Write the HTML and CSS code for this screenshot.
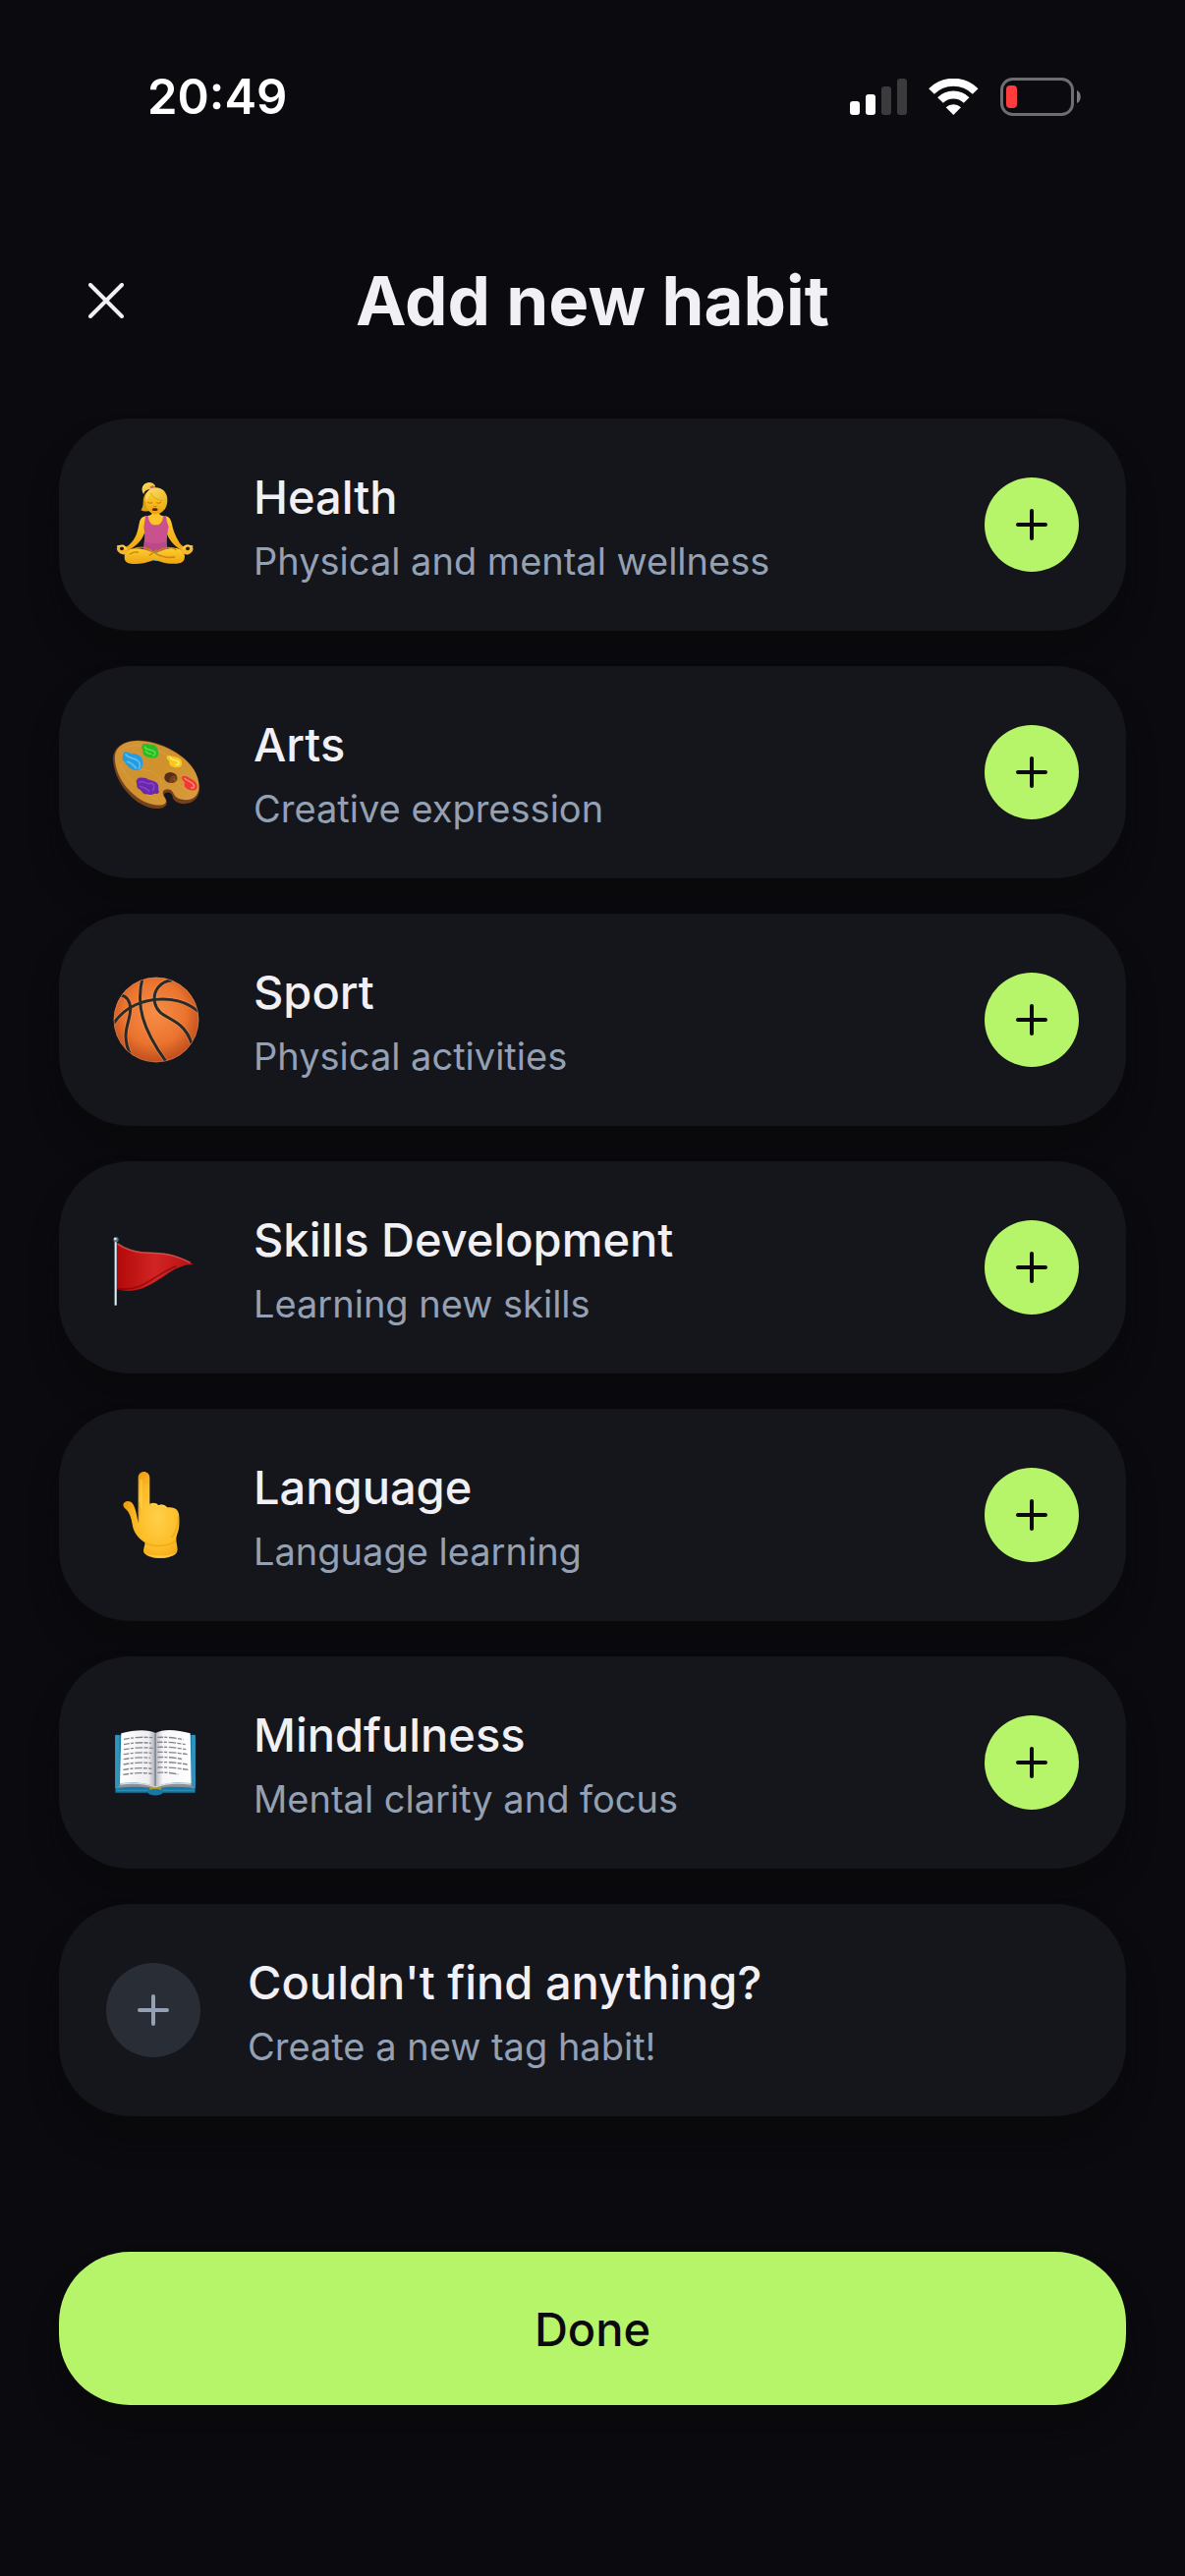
FILE: index.html
```html
<!DOCTYPE html>
<html lang="en">

<head>
    <meta charset="UTF-8">
    <meta name="viewport" content="width=device-width, initial-scale=1.0">
    <title>Add new habit</title>
    <link rel="stylesheet" href="styles.css">
</head>

<body>
    <!-- shared plus sign -->
    <svg class="defs" width="0" height="0" aria-hidden="true">
        <symbol id="plus" viewBox="0 0 32 32">
            <path d="M16 2v28M2 16h28" fill="none" stroke="currentColor" stroke-width="4" stroke-linecap="round" />
        </symbol>
    </svg>

    <div class="status">
        <time class="clock">20:49</time>
        <div class="signals">
            <svg width="58" height="37" viewBox="0 0 58 37" fill="#fff">
                <rect y="23" width="10" height="14" rx="3" />
                <rect x="16" y="16" width="10" height="21" rx="3" />
                <rect x="32" y="8" width="10" height="29" rx="3" fill="#3b3b3e" />
                <rect x="48" width="10" height="37" rx="3" fill="#3b3b3e" />
            </svg>
            <svg width="51" height="37" viewBox="315 57 153 111">
                <path d="M324 96A94.5 94.5 0 0 1 458 96M351 123A56.5 56.5 0 0 1 431 123" fill="none" stroke="#fff" stroke-width="24" />
                <path d="M391 168L368 145A34 34 0 0 1 414 145Z" fill="#fff" />
            </svg>
            <svg width="82" height="39" viewBox="0 0 82 39">
                <rect x="1.5" y="1.5" width="72" height="36" rx="11" fill="none" stroke="#6e6e71" stroke-width="3" />
                <rect x="6" y="8" width="11" height="23" rx="4" fill="#ff3b3b" />
                <path d="M78 13c5 2 5 11 0 13z" fill="#7c7c7f" />
            </svg>
        </div>
    </div>

    <header class="header">
        <button class="close" type="button" aria-label="Close">
            <svg width="36" height="36" viewBox="0 0 36 36">
                <path d="M2 2l32 32M34 2L2 34" fill="none" stroke="currentColor" stroke-width="4" stroke-linecap="round" />
            </svg>
        </button>
        <h1>Add new habit</h1>
    </header>

    <main class="content">
        <ul class="habits">
            <li class="card">
                <span class="emoji">
                    <!-- woman in lotus position -->
                    <svg viewBox="24 48 288 288">
                        <defs>
                            <linearGradient id="skin" x1="0" y1="0" x2="0" y2="1">
                                <stop offset="0" stop-color="#ffcf2c" />
                                <stop offset="1" stop-color="#eda313" />
                            </linearGradient>
                            <linearGradient id="hair" x1="0" y1="0" x2="1" y2="1">
                                <stop offset="0" stop-color="#ffe270" />
                                <stop offset="1" stop-color="#e6a90c" />
                            </linearGradient>
                        </defs>
                        <path d="M158 88C146 92 137 104 137 124c0 12-2 16-7 24 10 5 20 4 28 1z" fill="#dc9d10" />
                        <path d="M161 85c-12-1-21 5-22 14-9-10-6-28 6-33 10-5 22-3 29 7l-4 12z" fill="url(#hair)" />
                        <path d="M157 78l8-5 11 4-7 8z" fill="#d8507c" />
                        <path d="M163 148h24v26h-24z" fill="#e5a412" />
                        <path d="M141 169c7-4 20-5 24-10h20c5 6 16 6 24 10l-8 25h-53z" fill="#fec328" />
                        <path d="M146 166c-12 1-18 8-21 22-4 21-8 39-20 54-8 10-16 17-25 21l7 9c15-6 28-15 39-28 13-15 19-34 22-56zM205 166c10 1 16 9 19 21 5 24 12 39 20 54 5 10 12 16 21 22l-6 9c-14-6-26-15-36-28-12-15-19-34-22-57z" fill="url(#skin)" />
                        <path d="M166 269c5-5 19-5 24 0l-6 34h-14z" fill="#3c9cd0" />
                        <path d="M144 167l9 0c1 36 43 37 45 0h9c2 17 6 23 8 32-5 22-7 41-4 70-15 7-58 8-74-1 5-27 6-45 2-68z" fill="#c9528e" />
                        <path d="M139 244c17 7 51 7 70 0l2 23c-17 9-54 8-74 1z" fill="#a94277" opacity=".5" />
                        <path d="M145 125c0-20 10-34 28-34 20 0 34 15 34 35 0 20-15 34-31 34s-31-14-31-35z" fill="url(#skin)" />
                        <path d="M144 122c-4-19 7-41 29-43 23-1 38 16 38 37 0 17-5 24-11 33 2-14 0-24-5-30-16-1-29-10-35-23-4 10-8 18-16 26z" fill="url(#hair)" />
                        <path d="M160 95c8 15 20 21 38 25" fill="none" stroke="#d9a010" stroke-width="3" />
                        <path d="M151 124q7 5 14 1M178 125q7 4 14-1M169 136q4 3 9 0" fill="none" stroke="#bc7111" stroke-width="3" />
                        <ellipse cx="173" cy="146" rx="9" ry="4" fill="#511e16" />
                        <path d="M100 266c-13 4-20 14-20 26 0 14 10 20 25 20 24 1 44-4 68-13 24 10 48 14 68 12 16-1 23-9 23-22-1-13-9-22-25-25-21-4-43 6-64 15-25-8-51-19-75-13z" fill="url(#skin)" />
                        <path d="M114 264c13-4 30-4 44 5 22 15 42 28 75 22M178 270l-21 16M183 272c20-13 45-12 55-3M121 276c-10-2-18 2-25 6" fill="none" stroke="#cb8511" stroke-width="4" stroke-linecap="round" />
                        <path d="M91 265c-9-11-22-14-32-6-5 6-2 13 4 18 6 6 17 9 24 4zM252 265c10-12 23-15 35-6 5 5 3 14-4 19-8 7-18 7-25 2z" fill="#f7b62b" />
                        <circle cx="72" cy="265" r="6" fill="#251c17" />
                        <circle cx="273" cy="265" r="6" fill="#251c17" />
                        <path d="M59 258l17-2 8 9M287 258l-17-2-9 9" fill="none" stroke="#ffd047" stroke-width="5" stroke-linecap="round" />
                    </svg>
                </span>
                <div class="info">
                    <h2>Health</h2>
                    <p>Physical and mental wellness</p>
                </div>
                <button class="add" type="button" aria-label="Add Health"><svg><use href="#plus" /></svg></button>
            </li>
            <li class="card">
                <span class="emoji">
                    <!-- artist palette -->
                    <svg viewBox="24 24 288 288">
                        <defs>
                            <linearGradient id="wood" x1="0" y1="0" x2="1" y2="1">
                                <stop offset="0" stop-color="#d3943a" />
                                <stop offset=".5" stop-color="#cf922d" />
                                <stop offset="1" stop-color="#d99c40" />
                            </linearGradient>
                        </defs>
                        <path d="M45 128C44 94 76 72 116 71c62-3 146 37 177 90 18 32 23 69 5 88-17 20-51 19-64 6-9-8-5-17-12-22-8-7-22-4-21 5 1 11 11 15 8 26-3 14-23 17-42 14C106 268 48 196 45 128z" fill="#74401d" />
                        <path d="M51 118c3-30 33-46 68-46 61 0 141 38 172 87 18 29 22 62 8 80-14 18-48 16-61 5-9-8-9-17-17-22-10-5-25-2-24 10 2 14 13 17 9 28-3 10-22 10-37 7C105 254 47 181 51 118zM204 177c-5 13 4 24 19 24 16 0 23-12 16-23-8-12-29-13-35-1z" fill="url(#wood)" fill-rule="evenodd" />
                        <path d="M74 97c50-28 120 4 158 34M66 141c22 51 65 87 111 109M112 162c48-8 79 17 82 41M230 187c15 20 29 31 57 46" fill="none" stroke="#e8b35e" stroke-width="2" opacity=".5" />
                        <path d="M204 177c5-12 27-11 35 1-12-2-22 2-22 22-13-3-17-13-13-23z" fill="#552d18" />
                        <path d="M78 108c7-7 17 3 28 4 14 0 27 8 29 20 3 7 0 17-3 24-6 8-18 8-27 4-14-5-18-14-25-24-9-6-5-18-2-28z" fill="#249de0" />
                        <path d="M84 114c7 12 25 9 37 19 8 7 8 19 2 24M89 136c12 3 20 11 26 20" fill="none" stroke="#7bd0f6" stroke-width="5" stroke-linecap="round" opacity=".65" />
                        <path d="M135 83c13-5 25 2 35 2 9 5 13 13 13 22 4 12-8 20-20 17-13-2-26-5-27-17 3-8-8-13-1-24z" fill="#28bd27" />
                        <path d="M142 90c3 12 21 9 27 13 8 5 5 12-1 14M145 104c5 8 11 9 16 8" fill="none" stroke="#81ef57" stroke-width="4" stroke-linecap="round" opacity=".7" />
                        <path d="M211 118c9-3 18 4 29 4 14 3 17 14 15 25-4 7-14 8-25 5-12-3-14-8-13-18-3-3-12-7-6-16z" fill="#f6c91d" />
                        <path d="M220 123c4 11 18 5 25 13 3 6 0 10-8 9" fill="none" stroke="#fff087" stroke-width="4" stroke-linecap="round" />
                        <path d="M257 181c8-6 20 4 29 9 12 7 17 15 16 25-4 10-15 10-26 6-14-4-14-16-12-22-6-6-12-12-7-18z" fill="#ee3934" />
                        <path d="M264 187c7 8 20 9 27 19 4 6 0 12-7 9" fill="none" stroke="#ff9482" stroke-width="4" stroke-linecap="round" />
                        <path d="M119 189c8-7 18-3 27-3 8 8 20 5 28 12 11 4 10 15 10 24 4 8 0 14-9 11-9 1-15 7-25 2-13 2-16-9-22-14-9-2-11-9-10-17-3-6-2-12 1-15z" fill="#6a28ac" />
                        <path d="M125 199c14-9 19 8 34 3 13-2 14 15 7 22M128 211c12 5 20 5 27 15" fill="none" stroke="#9753d5" stroke-width="4" stroke-linecap="round" opacity=".7" />
                    </svg>
                </span>
                <div class="info">
                    <h2>Arts</h2>
                    <p>Creative expression</p>
                </div>
                <button class="add" type="button" aria-label="Add Arts"><svg><use href="#plus" /></svg></button>
            </li>
            <li class="card">
                <span class="emoji">
                    <!-- basketball -->
                    <svg viewBox="24 30 288 288">
                        <defs>
                            <radialGradient id="ball" cx=".48" cy=".42" r=".56">
                                <stop offset="0" stop-color="#fa9048" />
                                <stop offset=".65" stop-color="#ed7630" />
                                <stop offset="1" stop-color="#c4501d" />
                            </radialGradient>
                            <pattern id="dots" width="8" height="8" patternUnits="userSpaceOnUse">
                                <circle cx="2" cy="2" r="1.5" fill="#c55621" />
                                <circle cx="6" cy="6" r="1.5" fill="#c55621" />
                            </pattern>
                            <clipPath id="round"><circle cx="177" cy="174" r="129" /></clipPath>
                        </defs>
                        <circle cx="177" cy="174" r="130" fill="url(#ball)" />
                        <circle cx="177" cy="174" r="126" fill="url(#dots)" opacity=".3" />
                        <g clip-path="url(#round)" fill="none">
                            <path d="M42 192C80 131 143 110 199 111c47 1 87 19 111 42M135 46c-20 83-2 154 73 257M225 53c-36 3-60 33-52 70 12 55 84 36 112 123M68 99c19 2 31 19 30 45-1 26-14 50-14 78 0 25 6 43 15 60" stroke="#f7a76c" stroke-width="14" opacity=".4" />
                            <path d="M42 192C80 131 143 110 199 111c47 1 87 19 111 42M135 46c-20 83-2 154 73 257M225 53c-36 3-60 33-52 70 12 55 84 36 112 123M68 99c19 2 31 19 30 45-1 26-14 50-14 78 0 25 6 43 15 60" stroke="#292b2a" stroke-width="9" />
                        </g>
                        <circle cx="177" cy="174" r="129" fill="none" stroke="#e5a47c" stroke-width="2" opacity=".6" />
                    </svg>
                </span>
                <div class="info">
                    <h2>Sport</h2>
                    <p>Physical activities</p>
                </div>
                <button class="add" type="button" aria-label="Add Sport"><svg><use href="#plus" /></svg></button>
            </li>
            <li class="card">
                <span class="emoji">
                    <!-- triangular flag -->
                    <svg viewBox="24 6 288 288">
                        <defs>
                            <linearGradient id="cloth">
                                <stop offset="0" stop-color="#b20909" />
                                <stop offset=".5" stop-color="#d22424" />
                                <stop offset="1" stop-color="#b31212" />
                            </linearGradient>
                            <linearGradient id="pole">
                                <stop offset="0" stop-color="#71808a" />
                                <stop offset=".5" stop-color="#f4fbff" />
                                <stop offset="1" stop-color="#7c8b95" />
                            </linearGradient>
                        </defs>
                        <path d="M57 74c23 19 49 28 84 30 59 2 92 2 150 37-75-1-113 78-198 81-16 0-28-1-36-5z" fill="url(#cloth)" />
                        <path d="M59 78c25 17 48 25 83 27 57 2 89 4 139 31" fill="none" stroke="#ee6a64" stroke-width="5" opacity=".6" />
                        <path d="M58 215c80 12 113-45 180-69" fill="none" stroke="#750408" stroke-width="5" opacity=".6" />
                        <rect x="49" y="69" width="8" height="197" fill="url(#pole)" />
                        <circle cx="54" cy="65" r="8" fill="#5e7184" />
                        <circle cx="52" cy="63" r="4" fill="#dce8ef" />
                    </svg>
                </span>
                <div class="info">
                    <h2>Skills Development</h2>
                    <p>Learning new skills</p>
                </div>
                <button class="add" type="button" aria-label="Add Skills Development"><svg><use href="#plus" /></svg></button>
            </li>
            <li class="card">
                <span class="emoji">
                    <!-- backhand pointing up -->
                    <svg viewBox="24 42 288 288">
                        <defs>
                            <radialGradient id="hand" cx=".62" cy=".52" r=".62">
                                <stop offset="0" stop-color="#ffd04b" />
                                <stop offset=".6" stop-color="#fdbd27" />
                                <stop offset="1" stop-color="#ef9c0e" />
                            </radialGradient>
                        </defs>
                        <path d="M122 211V73c0-25 35-25 35 0v82c6-7 21-7 26 2 10-5 22-2 27 6 14-2 24 1 30 7 8 9 8 25 7 48-1 20-9 28-9 43 0 12 4 19 4 32-6 33-96 33-104 4 0-11 6-20 4-27-20-14-34-30-38-55-3-21-9-37-20-47-13-9-9-24 7-24 20 0 24 31 31 67z" fill="url(#hand)" />
                        <path d="M142 269c20 16 68 16 95-4M122 209c4-12 4-35 3-61M244 190c0 30-7 52-22 65" fill="none" stroke="#e39211" stroke-width="4" opacity=".5" />
                        <path d="M157 154c7-4 20-3 25 4M184 159c9-5 20-1 25 6M131 78v86" fill="none" stroke="#ffdc65" stroke-width="5" opacity=".6" />
                        <path d="M138 297c9 26 97 26 104 0-8 17-95 19-104 0z" fill="#ffd155" opacity=".7" />
                    </svg>
                </span>
                <div class="info">
                    <h2>Language</h2>
                    <p>Language learning</p>
                </div>
                <button class="add" type="button" aria-label="Add Language"><svg><use href="#plus" /></svg></button>
            </li>
            <li class="card">
                <span class="emoji">
                    <!-- open book -->
                    <svg viewBox="24 18 288 288">
                        <defs>
                            <linearGradient id="page">
                                <stop offset="0" stop-color="#fff" />
                                <stop offset=".8" stop-color="#eeeef3" />
                                <stop offset="1" stop-color="#aaaab5" />
                            </linearGradient>
                            <linearGradient id="page2">
                                <stop offset="0" stop-color="#b6b6c0" />
                                <stop offset=".2" stop-color="#f7f7fa" />
                                <stop offset="1" stop-color="#fff" />
                            </linearGradient>
                        </defs>
                        <path d="M52 78h244v176H197c-5 11-39 11-46 0H52z" fill="#1877a3" />
                        <path d="M53 79h10v161H53zM286 79h9v161h-9zM56 247h97M196 247h97" fill="#3193bc" stroke="#3193bc" stroke-width="3" />
                        <path d="M66 225l-5 14c45-4 78-3 108 2h11c33-6 69-5 109-2l-6-14z" fill="#8e9297" />
                        <path d="M155 240c9-9 29-9 39 0l-4 6c-8-5-24-5-31 0z" fill="#b39b16" />
                        <path d="M70 73c39-11 82-14 105-1v164c-30-15-73-14-109-11z" fill="url(#page)" />
                        <path d="M175 72c23-14 67-10 106 1l3 152c-36-3-79-4-109 11z" fill="url(#page2)" />
                        <path d="M67 228c41-5 80-2 107 9 28-11 67-14 109-9" fill="none" stroke="#d9dadd" stroke-width="4" />
                        <path d="M174 75v160" stroke="#707078" stroke-width="3" />
                        <path d="M78 91q45-9 88-5M78 107q45-9 84-4M78 122q44-8 89-4M77 137q45-8 86-4M77 152q45-8 82-4M77 168q45-9 86-4M76 184q45-8 87-3M76 199q45-8 88-3M181 85q39-2 79 7M180 100q39-2 86 7M181 115q39-2 87 7M181 130q40-1 91 7M181 146q39-2 76 6M181 161q39-2 91 7M181 177q39-2 93 7M181 193q34-2 63 5" fill="none" stroke="#85858c" stroke-width="4" stroke-dasharray="17 4 9 5 23 4 12 4" />
                    </svg>
                </span>
                <div class="info">
                    <h2>Mindfulness</h2>
                    <p>Mental clarity and focus</p>
                </div>
                <button class="add" type="button" aria-label="Add Mindfulness"><svg><use href="#plus" /></svg></button>
            </li>
            <li class="card">
                <button class="add create" type="button" aria-label="Create a new tag habit"><svg><use href="#plus" /></svg></button>
                <div class="info">
                    <h2>Couldn't find anything?</h2>
                    <p>Create a new tag habit!</p>
                </div>
            </li>
        </ul>

        <button class="done" type="button">Done</button>
    </main>
</body>

</html>
```
FILE: styles.css
```css
* {
    box-sizing: border-box;
}

body,
h1,
h2,
p,
ul {
    margin: 0;
    padding: 0;
}

body {
    min-height: 100vh;
    background: #0a0a0f;
    color: #f0f0f5;
    font-family: Inter, "Liberation Sans", sans-serif;
}

button {
    padding: 0;
    border: 0;
    font: inherit;
    cursor: pointer;
}

svg {
    display: block;
}

.defs {
    position: absolute;
}

/* status bar */
.status {
    display: flex;
    align-items: center;
    justify-content: space-between;
    height: 196px;
    padding: 0 106px 0 150px;
    color: #fff;
}

.clock {
    font-size: 49px;
    font-weight: 600;
}

.signals {
    display: flex;
    align-items: center;
    gap: 22px;
}

/* title row */
.header {
    display: grid;
    grid-template-columns: 96px 1fr 96px;
    align-items: center;
    height: 220px;
    padding: 0 60px;
}

.header h1 {
    font-size: 69px;
    font-weight: 700;
    text-align: center;
}

.close {
    display: flex;
    align-items: center;
    justify-content: center;
    height: 96px;
    background: none;
    color: #f0f0f5;
}

.content {
    padding: 10px 60px 60px;
}

/* habit cards */
.habits {
    display: flex;
    flex-direction: column;
    gap: 36px;
    list-style: none;
}

.card {
    display: flex;
    align-items: center;
    gap: 48px;
    padding: 44px 48px;
    border-radius: 72px;
    background: #15161b;
    box-shadow: 0 24px 36px -12px rgba(10, 10, 10, .8);
}

.emoji {
    width: 102px;
}

.emoji svg {
    width: 96px;
    height: 96px;
}

.info {
    flex: 1;
    display: flex;
    flex-direction: column;
    gap: 6px;
    padding-top: 4px;
}

.info h2 {
    font-size: 47px;
    font-weight: 500;
    line-height: 64px;
}

.info p {
    color: #94a0b3;
    font-size: 38px;
    line-height: 54px;
}

.add {
    display: flex;
    align-items: center;
    justify-content: center;
    width: 96px;
    height: 96px;
    border-radius: 50%;
    background: #b6f46a;
    color: #0a0a0f;
}

.add svg {
    width: 32px;
    height: 32px;
}

.create {
    background: #292d36;
    color: #94a0b3;
}

.done {
    display: block;
    width: 100%;
    height: 156px;
    margin-top: 138px;
    border-radius: 72px;
    background: #b6f46a;
    box-shadow: 0 24px 36px -12px rgba(10, 10, 10, .8);
    color: #0a0a0f;
    font-size: 47px;
    font-weight: 500;
}
```
